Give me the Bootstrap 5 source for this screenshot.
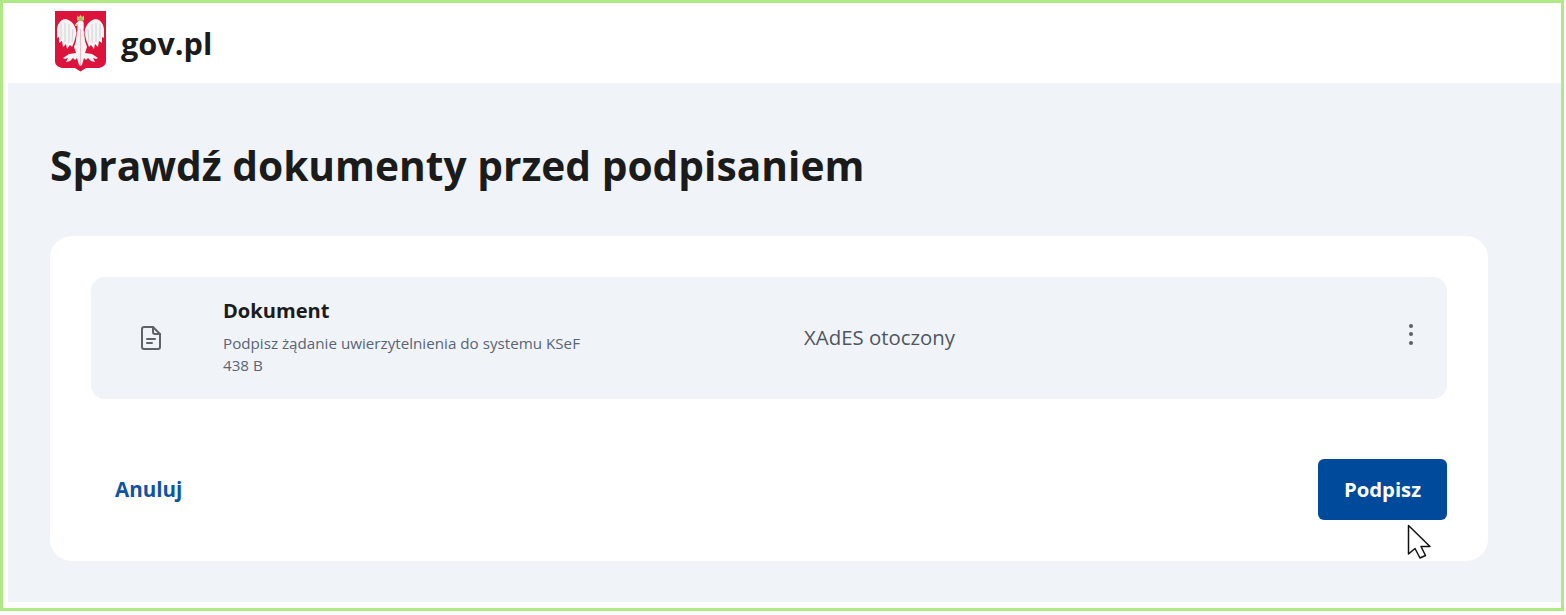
<!DOCTYPE html>
<html lang="pl">
<head>
<meta charset="utf-8">
<title>gov.pl</title>
<link href="https://cdn.jsdelivr.net/npm/bootstrap@5.3.0/dist/css/bootstrap.min.css" rel="stylesheet">
<style>
html,body{height:100%;}
body{background:#fff;font-family:"Open Sans","Liberation Sans",sans-serif;color:#1b1b1b;overflow:hidden;}
.frame{width:1564px;height:611px;border:3px solid #b0e884;padding-bottom:3px;background:#fff;}
.topbar{height:80px;padding-left:52px;gap:15px;}
.crest{width:51px;height:61px;margin-top:-4px;flex:none;}
.brand{font-size:30.7px;font-weight:700;color:#1b1b1b;line-height:1;}
.stage{margin-left:5px;height:519px;background:#f0f4f9;padding:0 73px 42px 42px;}
.heading{font-size:40.7px;font-weight:700;line-height:54px;margin:0;padding:55px 0 44px;color:#1b1b1b;}
.panel{background:#fff;border-radius:22px;height:325px;padding:41px 41px 40px 41px;}
.docrow{background:#f0f4f9;border-radius:14px;height:122px;}
.docicon{width:132px;padding-left:49px;flex:none;}
.docicon svg{width:22px;height:26px;display:block;}
.docmain{width:581px;flex:none;margin-bottom:2px;}
.docname{font-size:20.1px;font-weight:700;line-height:26px;margin-bottom:8px;color:#1b1b1b;}
.docsub{font-size:15.2px;line-height:22px;color:#5a6472;}
.doctype{font-size:20.4px;color:#4f5660;flex:1;margin-bottom:2px;}
.kebab{width:4px;margin-right:34px;gap:4.5px;margin-top:-8px;}
.kebab i{display:block;width:4px;height:4px;border-radius:50%;background:#5a5f66;}
.actions{margin-top:60px;padding-left:24px;}
.cancel{font-size:20.6px;font-weight:700;color:#0f53a3;text-decoration:none;}
.signbtn{background:#004a9c;border:0;color:#fff;width:129px;height:61px;border-radius:6px;font-size:20.3px;font-weight:700;padding:0;}
.signwrap{position:relative;}
.pointer{position:absolute;left:89px;top:65px;width:24px;height:36px;}
</style>
</head>
<body>
<div class="frame">
  <header class="topbar d-flex align-items-center">
    <svg class="crest" viewBox="0 0 51 61" role="img" aria-label="Godło Polski">
      <path d="M0 0H51V50C51 54 48 56 44 57H31L25.5 60.5L20 57H7C3 56 0 54 0 50Z" fill="#dc143c"/>
      <g id="eaglehalf">
        <path fill="#f4f4f4" d="M21.5 22C21 16 18 10 11 8C7 8 3 11 2 18V27L4 26V32L7 30L8 36L11 33L12 38L15 34L17 36L19.5 30Z"/>
        <path fill="#f4f4f4" d="M25.5 15H22.5C23 20 21 25 21 30L19 36L21 42L14 43L8 47L10 48L13 47L11 51L15 50L18 47L20 49L22 47L24 54L25.5 55Z"/>
        <path fill="none" stroke="#c6c9cf" stroke-width=".8" d="M6 13V28M10 12L10 31M14 13L14 32M18 18L17 31"/>
      </g>
      <use href="#eaglehalf" transform="matrix(-1 0 0 1 51 0)"/>
      <path fill="#f4f4f4" d="M22.5 11C23.5 9 27 9 28.5 11C29 13 28.5 16 28.5 18H22.5C23 17 23.5 16 23 14.5L20 15L21 12.5Z"/>
      <path fill="#d9cb6f" d="M22 4.5L24 6L25.5 4L27 6L29 4.5V9.5H22Z"/>
      <path fill="#8fc65f" d="M23.5 6.5H27.5V9H23.5Z"/>
      <path fill="#d9cb6f" d="M19.5 13.5L23 12.5V14.5Z"/>
    </svg>
    <div class="brand">gov.pl</div>
  </header>
  <main class="stage">
    <h1 class="heading">Sprawdź dokumenty przed podpisaniem</h1>
    <section class="panel">
      <div class="docrow d-flex align-items-center">
        <div class="docicon">
          <svg viewBox="0 0 22 26" fill="none" stroke="#5f6368" stroke-width="2" stroke-linejoin="round" stroke-linecap="round">
            <path d="M4 2H13L20 9V22A2 2 0 0 1 18 24H4A2 2 0 0 1 2 22V4A2 2 0 0 1 4 2Z"/>
            <path d="M13 2V7A2 2 0 0 0 15 9H20"/>
            <path d="M7 14H15M7 18H12"/>
          </svg>
        </div>
        <div class="docmain">
          <div class="docname">Dokument</div>
          <div class="docsub">Podpisz żądanie uwierzytelnienia do systemu KSeF</div>
          <div class="docsub">438 B</div>
        </div>
        <div class="doctype">XAdES otoczony</div>
        <div class="kebab d-flex flex-column" aria-label="Więcej"><i></i><i></i><i></i></div>
      </div>
      <div class="actions d-flex align-items-center justify-content-between">
        <a href="#" class="cancel">Anuluj</a>
        <div class="signwrap">
          <button type="button" class="signbtn btn">Podpisz</button>
          <svg class="pointer" viewBox="0 0 24 36"><path d="M1.5 1.5V30L8 24.5L13 34L18.5 31.5L14 22.5H23Z" fill="#fff" stroke="#111" stroke-width="1.5" stroke-linejoin="round"/></svg>
        </div>
      </div>
    </section>
  </main>
</div>
<script src="https://cdn.jsdelivr.net/npm/bootstrap@5.3.0/dist/js/bootstrap.bundle.min.js"></script>
</body>
</html>
